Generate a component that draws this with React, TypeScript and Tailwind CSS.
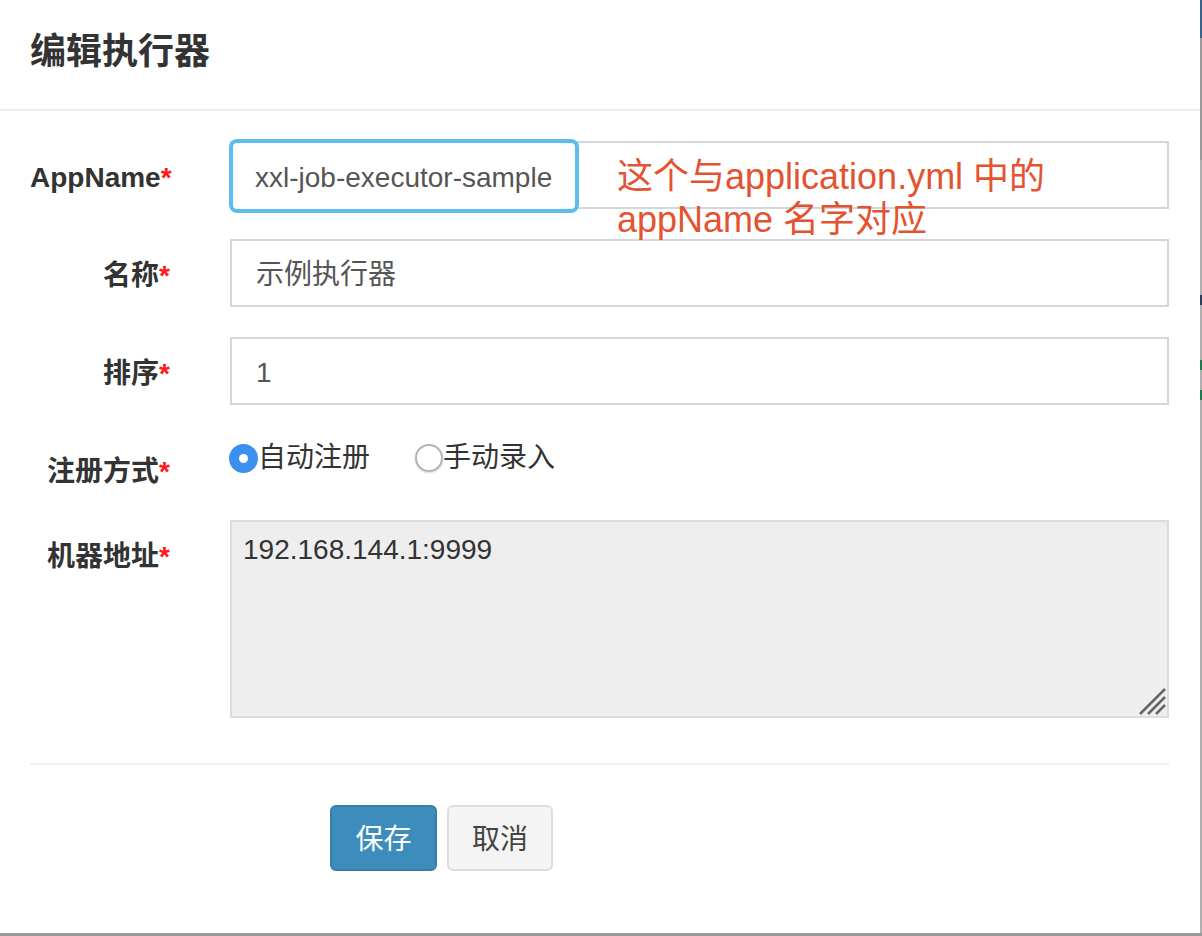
const font = { fontFamily: '"Liberation Sans", "Noto Sans CJK SC", sans-serif' };

const Req = () => <span className="text-[#ff1a1a]">*</span>;

const Label = ({ text }: { text: string }) => (
  <div className="w-[170px] shrink-0 pr-[30px] pt-[17px] text-right text-[28px] leading-[40px] font-bold text-[#333]">
    {text}
    <Req />
  </div>
);

const Radio = ({ checked, label }: { checked: boolean; label: string }) => (
  <label className="flex items-center">
    {checked ? (
      <span className="flex h-[29px] w-[29px] items-center justify-center rounded-full bg-[#3b8ff0]">
        <span className="h-[9px] w-[9px] rounded-full bg-white" />
      </span>
    ) : (
      <span className="h-[28px] w-[28px] rounded-full border-2 border-[#b5b5b5] bg-white shadow-[0_1px_2px_rgba(0,0,0,0.15)]" />
    )}
    <span className="text-[28px] leading-[40px] text-[#333]">{label}</span>
  </label>
);

export default function App() {
  return (
    <div className="flex h-[936px] w-[1202px] flex-col overflow-hidden bg-white" style={font}>
      <div className="flex flex-1">
        <div className="flex w-[1200px] flex-col">
          {/* header */}
          <div className="h-[111px] border-b-2 border-[#ececec] pl-[30px] pt-[27px]">
            <h2 className="text-[36px] leading-[50px] font-bold text-[#333]">编辑执行器</h2>
          </div>

          {/* body */}
          <div className="pl-[30px] pr-[31px] pt-[30px]">
            <div className="mb-[30px] flex items-start">
              <Label text="AppName" />
              <div className="relative ml-[30px] h-[68px] flex-1 border-2 border-[#d2d6de] bg-white">
                <div className="absolute left-[-3px] top-[-4px] flex h-[74px] w-[350px] items-center rounded-[8px] border-4 border-[#5bbdf2] bg-white pl-[22px] pt-[3px] text-[28px] text-[#555]">
                  xxl-job-executor-sample
                </div>
                <div className="absolute left-[385px] top-[12px] whitespace-nowrap text-[36px] leading-[43px] text-[#e4532f]">
                  这个与application.yml 中的
                  <br />
                  appName 名字对应
                </div>
              </div>
            </div>

            <div className="mb-[30px] flex items-start">
              <Label text="名称" />
              <div className="ml-[30px] flex h-[68px] flex-1 items-center border-2 border-[#d2d6de] pl-[24px] pt-[3px] text-[28px] text-[#555]">
                示例执行器
              </div>
            </div>

            <div className="mb-[30px] flex items-start">
              <Label text="排序" />
              <div className="ml-[30px] flex h-[68px] flex-1 items-center border-2 border-[#d2d6de] pl-[24px] pt-[3px] text-[28px] text-[#555]">
                1
              </div>
            </div>

            <div className="mb-[30px] flex h-[55px] items-start">
              <Label text="注册方式" />
              <div className="ml-[29px] flex gap-[45px] pt-[3px]">
                <Radio checked label="自动注册" />
                <Radio checked={false} label="手动录入" />
              </div>
            </div>

            <div className="flex items-start">
              <Label text="机器地址" />
              <div className="relative ml-[30px] h-[198px] flex-1 border-2 border-[#dcdcdc] bg-[#eeeeee] pl-[11px] pt-[8px] text-[28px] leading-[40px] text-[#333]">
                192.168.144.1:9999
                <svg className="absolute bottom-[1px] right-[1px]" width="28" height="28" viewBox="0 0 28 28">
                  <g stroke="#666" strokeWidth="2.5" strokeLinecap="butt">
                    <line x1="2" y1="27" x2="27" y2="2" />
                    <line x1="10" y1="27" x2="27" y2="10" />
                    <line x1="18" y1="27" x2="27" y2="18" />
                  </g>
                </svg>
              </div>
            </div>

            {/* footer */}
            <div className="mt-[45px] border-t-2 border-[#f0f0f0] pt-[40px]">
              <div className="ml-[300px] flex gap-[10px]">
                <button className="h-[66px] w-[107px] rounded-[6px] border-2 border-[#367fa9] bg-[#3c8dbc] pt-[3px] text-[28px] text-white">
                  保存
                </button>
                <button className="h-[66px] w-[106px] rounded-[6px] border-2 border-[#dddddd] bg-[#f4f4f4] pt-[3px] text-[28px] text-[#444]">
                  取消
                </button>
              </div>
            </div>
          </div>
        </div>

        {/* right window edge */}
        <div className="flex w-[2px] flex-col bg-[#b0b0b0]">
          <div className="h-[38px] bg-[#35658f]" />
          <div className="h-[122px] bg-[#9a9a9a]" />
          <div className="mt-[135px] h-[10px] bg-[#2a3f5f]" />
          <div className="mt-[55px] h-[10px] bg-[#1e7a4e]" />
          <div className="mt-[20px] h-[10px] bg-[#1e7a4e]" />
        </div>
      </div>
      <div className="h-[3px] bg-[#9a9a9a]" />
    </div>
  );
}
